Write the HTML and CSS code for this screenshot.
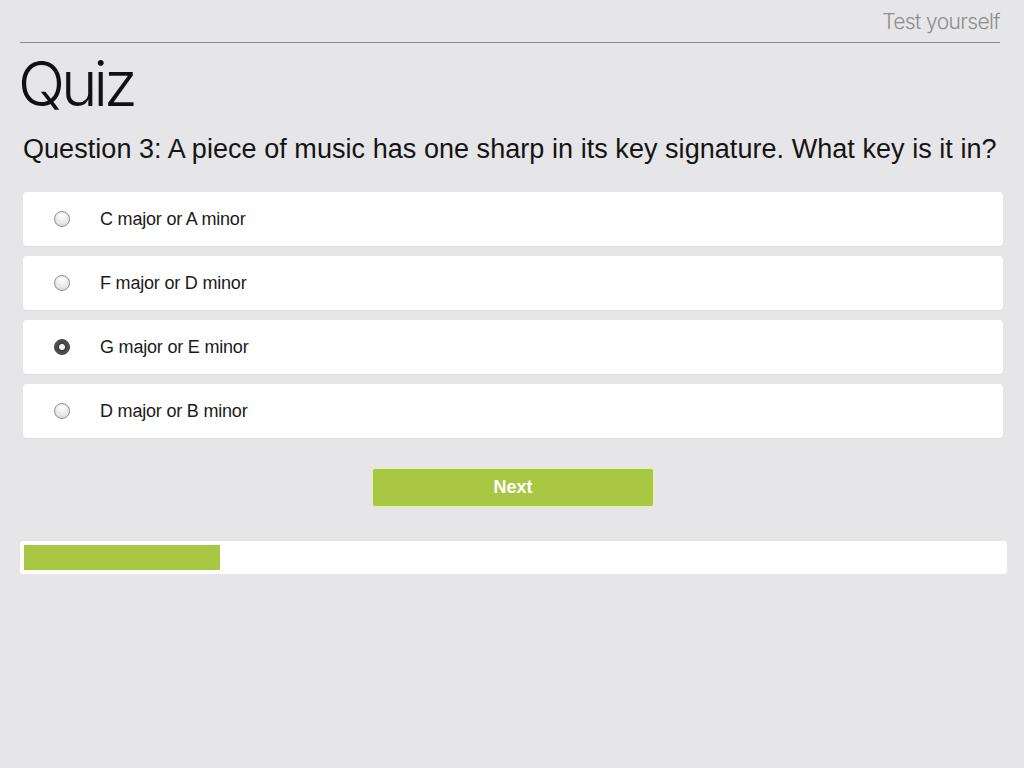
FILE: index.html
```html
<!DOCTYPE html>
<html>
<head>
<meta charset="utf-8">
<link rel="stylesheet" href="styles.css">
</head>
<body>
<div class="page">
  <header class="topbar">
    <span class="section">Test yourself</span>
  </header>
  <h1 class="title">Quiz</h1>
  <p class="question">Question 3: A piece of music has one sharp in its key signature. What key is it in?</p>
  <div class="options">
    <label class="option"><span class="radio"></span><span class="label">C major or A minor</span></label>
    <label class="option"><span class="radio"></span><span class="label">F major or D minor</span></label>
    <label class="option"><span class="radio checked"></span><span class="label">G major or E minor</span></label>
    <label class="option"><span class="radio"></span><span class="label">D major or B minor</span></label>
  </div>
  <div class="actions">
    <button class="next">Next</button>
  </div>
  <div class="progress"><div class="fill" style="width:196px"></div></div>
</div>
</body>
</html>
```
FILE: styles.css
```css
html, body {
  margin: 0;
  padding: 0;
  background: #e6e5e7;
}
body {
  font-family: "Liberation Sans", Arial, sans-serif;
  color: #111;
}
.page {
  width: 1024px;
  height: 768px;
  box-sizing: border-box;
  padding: 0 0 0 20px;
}
.topbar {
  width: 980px;
  height: 43px;
  box-sizing: border-box;
  border-bottom: 1px solid #8c8c8c;
  display: flex;
  justify-content: flex-end;
  align-items: flex-start;
}
.section {
  font-family: "Inter", "Liberation Sans", sans-serif;
  font-weight: 300;
  font-size: 21px;
  line-height: 22px;
  margin-top: 11px;
  color: #8d8d8d;
  letter-spacing: -0.6px;
}
.title {
  font-family: "Inter", "Liberation Sans", sans-serif;
  font-weight: 300;
  font-size: 62px;
  line-height: 62px;
  letter-spacing: -4px;
  margin: 10px 0 0 -2px;
  color: #111;
}
.question {
  font-size: 27px;
  line-height: 30px;
  margin: 19px 0 0 3px;
  color: #141414;
  letter-spacing: 0.05px;
}
.options {
  margin: 28px 0 0 3px;
  width: 980px;
  display: flex;
  flex-direction: column;
  gap: 10px;
}
.option {
  height: 54px;
  background: #fff;
  border-radius: 4px;
  display: flex;
  align-items: center;
  box-shadow: 0 1px 1px rgba(0,0,0,0.04);
}
.radio {
  width: 16px;
  height: 16px;
  box-sizing: border-box;
  border-radius: 50%;
  border: 1px solid #8e8e8e;
  background: radial-gradient(circle at 50% 30%, #ffffff 0%, #e9e9e9 55%, #cfcfcf 100%);
  margin-left: 31px;
  flex: none;
}
.radio.checked {
  border-color: #3a3a3a;
  background: radial-gradient(circle at 50% 50%, #f2f2f2 0, #f2f2f2 2.5px, #3c3c3c 3.5px, #6a6a6a 100%);
}
.label {
  margin-left: 30px;
  font-size: 18px;
  color: #1a1a1a;
  letter-spacing: -0.2px;
}
.actions {
  width: 986px;
  display: flex;
  justify-content: center;
  margin-top: 30px;
}
.next {
  width: 282px;
  height: 39px;
  background: #a8c843;
  border: 1px solid #e2f4a0;
  border-radius: 3px;
  color: #fff;
  font-family: "Liberation Sans", Arial, sans-serif;
  font-weight: bold;
  font-size: 18px;
  padding: 0;
}
.progress {
  margin-top: 34px;
  width: 987px;
  height: 33px;
  box-sizing: border-box;
  padding: 4px;
  background: #fff;
  border-radius: 3px;
}
.fill {
  height: 25px;
  background: #a8c843;
}
```
